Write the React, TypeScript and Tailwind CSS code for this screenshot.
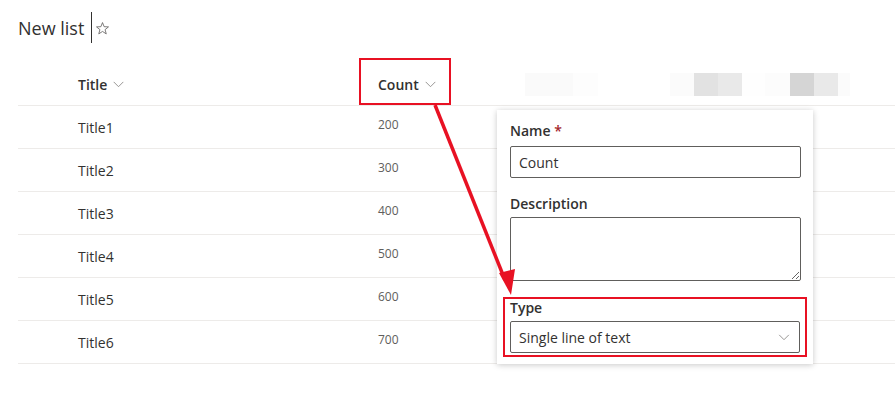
import React from 'react';

const rows = [
  { title: 'Title1', count: 200 },
  { title: 'Title2', count: 300 },
  { title: 'Title3', count: 400 },
  { title: 'Title4', count: 500 },
  { title: 'Title5', count: 600 },
  { title: 'Title6', count: 700 },
];

const Chevron = ({ className }: { className?: string }) => (
  <svg viewBox="0 0 12 8" className={className} fill="none" stroke="currentColor" strokeWidth="1">
    <path d="M0.5 1 L6 6.5 L11.5 1" />
  </svg>
);

export default function App() {
  return (
    <div
      className="relative h-[420px] w-[895px] overflow-hidden bg-white text-[#323130]"
      style={{ fontFamily: '"Segoe UI", "Open Sans", "Noto Sans", sans-serif' }}>
      {/* page heading */}
      <div className="flex h-[63px] items-start pl-[18px] pt-[12px]">
        <h1 className="text-[18px] leading-[32px]">New list</h1>
        <span className="ml-[7px] h-[31px] w-px bg-[#323130]" />
        <svg viewBox="0 0 24 24" className="ml-[3px] mt-[9px] h-[15px] w-[15px] text-[#605e5c]" fill="none" stroke="currentColor" strokeWidth="1.3" strokeLinejoin="round">
          <path d="M12 2.5 L14.6 9.1 L21.6 9.4 L16.1 13.8 L18 20.6 L12 16.7 L6 20.6 L7.9 13.8 L2.4 9.4 L9.4 9.1 Z" />
        </svg>
      </div>

      {/* list */}
      <div className="ml-[18px]">
        <div className="flex h-[43px] items-center border-b border-[#edebe9]">
          <div className="flex w-[342px] items-center pl-[60px] text-[14px] font-semibold">
            Title
            <Chevron className="ml-[6px] h-[7px] w-[11px] text-[#8a8886]" />
          </div>
          <div className="flex w-[90px] items-center pl-[18px] text-[14px] font-semibold">
            Count
            <Chevron className="ml-[6px] h-[7px] w-[11px] text-[#8a8886]" />
          </div>
          {/* blurred-out column headers */}
          <div className="ml-[75px] flex h-[23px]">
            <div className="w-[48px] bg-[#fafafa]" />
            <div className="w-[25px] bg-[#fdfdfd]" />
          </div>
          <div className="ml-[72px] flex h-[23px]">
            <div className="w-[24px] bg-[#fbfbfb]" />
            <div className="w-[24px] bg-[#e2e2e2]" />
            <div className="w-[24px] bg-[#e9e9e9]" />
            <div className="w-[23px] bg-[#fefefe]" />
            <div className="w-[25px] bg-[#fcfcfc]" />
            <div className="w-[24px] bg-[#d5d5d5]" />
            <div className="w-[24px] bg-[#e9e9e9]" />
            <div className="w-[12px] bg-[#fbfbfb]" />
          </div>
        </div>
        {rows.map((row) => (
          <div key={row.title} className="flex h-[43px] items-center border-b border-[#edebe9]">
            <div className="w-[342px] pl-[60px] text-[14px]">{row.title}</div>
            <div className="-translate-y-[2px] pl-[18px] text-[12px] text-[#605e5c]">{row.count}</div>
          </div>
        ))}
      </div>

      {/* red annotation around Count header */}
      <div className="absolute left-[359px] top-[58px] h-[47px] w-[92px] border-2 border-[#e81123]" />

      {/* column settings panel */}
      <div className="absolute left-[497px] top-[110px] w-[316px] bg-white px-[13px] pb-[7px] pt-[11px] shadow-[0_1px_6px_rgba(0,0,0,0.22)]">
        <label className="block text-[14px] font-semibold leading-[20px]">
          Name <span className="text-[#a4262c]">*</span>
        </label>
        <div className="mt-[5px] flex h-[32px] w-[291px] items-center rounded-[2px] border border-[#605e5c] px-[8px] text-[14px]">
          Count
        </div>

        <label className="mt-[16px] block text-[14px] font-semibold leading-[20px]">Description</label>
        <textarea className="mt-[3px] block h-[64px] w-[291px] rounded-[2px] border border-[#605e5c] bg-white" />

        <div className="-mx-[7px] mt-[16px] border-2 border-[#e81123] px-[5px] pb-[2px]">
          <label className="block text-[14px] font-semibold leading-[18px]">Type</label>
          <div className="mt-[4px] flex h-[32px] items-center justify-between rounded-[2px] border border-[#605e5c] px-[8px] text-[14px]">
            <span>Single line of text</span>
            <Chevron className="mr-[1px] h-[7px] w-[12px] text-[#8a8886]" />
          </div>
        </div>
      </div>

      {/* arrow from Count header to Type field */}
      <svg className="pointer-events-none absolute left-0 top-0 h-[420px] w-[895px]" viewBox="0 0 895 420">
        <line x1="435" y1="105" x2="505" y2="280" stroke="#e81123" strokeWidth="3.5" />
        <polygon points="511,295 499,273 515,269" fill="#e81123" />
      </svg>
    </div>
  );
}
